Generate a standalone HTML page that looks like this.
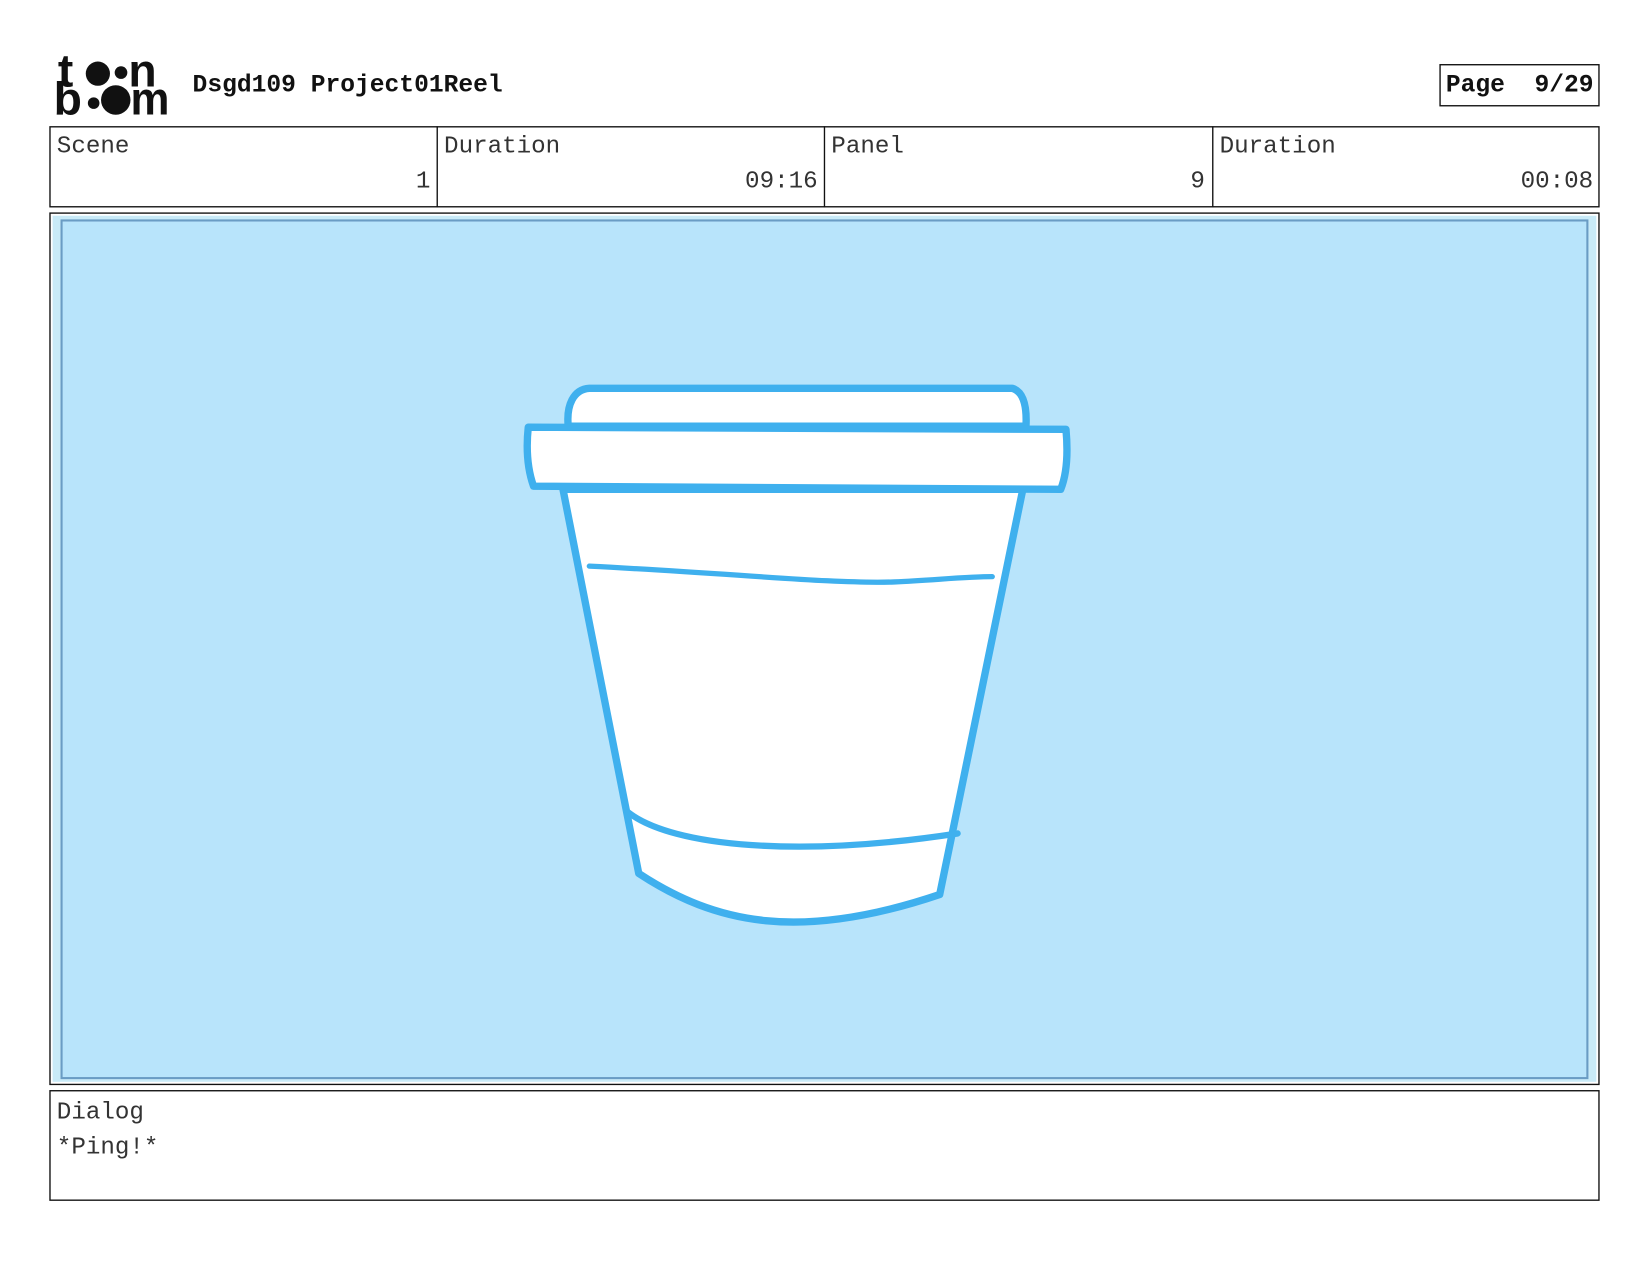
<!DOCTYPE html>
<html><head><meta charset="utf-8"><style>
html,body{margin:0;padding:0;background:#fff;}
svg{display:block;}
text{font-family:"Liberation Mono",monospace;}
.ls{font-family:"Liberation Sans",sans-serif;font-weight:bold;}
</style></head><body>
<svg width="1650" height="1275" viewBox="0 0 1568 1211.6" preserveAspectRatio="none" xmlns="http://www.w3.org/2000/svg">
<rect width="1568" height="1212" fill="#fff"/>
<g fill="#111">
<text class="ls" x="55" y="82" font-size="44">t</text>
<circle cx="93" cy="70" r="11.5"/>
<circle cx="115" cy="69" r="6"/>
<text class="ls" x="122" y="82" font-size="44">n</text>
<text class="ls" x="51" y="109" font-size="44">b</text>
<circle cx="89" cy="98" r="5.5"/>
<circle cx="110" cy="95" r="14"/>
<text class="ls" x="124" y="109" font-size="44" textLength="37" lengthAdjust="spacingAndGlyphs">m</text>
</g>
<text x="183" y="87" font-weight="bold" font-size="23.4" fill="#111">Dsgd109 Project01Reel</text>
<rect x="1368.5" y="61.5" width="151" height="39" fill="none" stroke="#111" stroke-width="1.3"/>
<text x="1374" y="87" font-weight="bold" font-size="23.4" fill="#111" xml:space="preserve">Page  9/29</text>
<g stroke="#111" stroke-width="1.3" fill="none">
<rect x="47.5" y="120.5" width="1472" height="76"/>
<line x1="415.5" y1="120" x2="415.5" y2="197"/>
<line x1="783.5" y1="120" x2="783.5" y2="197"/>
<line x1="1152.5" y1="120" x2="1152.5" y2="197"/>
</g>
<g font-size="23" fill="#333">
<text x="54" y="145">Scene</text>
<text x="409" y="178" text-anchor="end">1</text>
<text x="422" y="145">Duration</text>
<text x="777" y="178" text-anchor="end">09:16</text>
<text x="790" y="145">Panel</text>
<text x="1145" y="178" text-anchor="end">9</text>
<text x="1159" y="145">Duration</text>
<text x="1514" y="178" text-anchor="end">00:08</text>
</g>
<rect x="47.5" y="202.5" width="1472" height="828" fill="#fff" stroke="#111" stroke-width="1.3"/>
<rect x="50" y="205" width="1467" height="823" fill="#c9ebf8"/>
<rect x="58.5" y="209.5" width="1450" height="815" fill="#b8e4fb" stroke="#6a9cc4" stroke-width="2"/>
<g stroke="#3fb0ee" stroke-width="7" stroke-linejoin="round" stroke-linecap="round" fill="#fff">
<path d="M535,465 L607,830 C680,878 760,895 893,850 L972,465 Z"/>
<path d="M540,405 C538,385 545,370 560,369 L962,369 C972,372 976,385 975,405 Z"/>
<path d="M502,406 L1013,408 C1015,430 1014,450 1008,465 L507,462 C501,445 500,425 502,406 Z"/>
<path d="M560,538 C700,545 790,555 850,553 C890,551 920,548 943,548" fill="none" stroke-width="5"/>
<path d="M597,772 C640,805 760,815 910,792" fill="none" stroke-width="6"/>
</g>
<rect x="47.5" y="1036.5" width="1472" height="104" fill="none" stroke="#111" stroke-width="1.3"/>
<g font-size="23" fill="#333">
<text x="54" y="1063">Dialog</text>
<text x="54" y="1096">*Ping!*</text>
</g>
</svg>
</body></html>
